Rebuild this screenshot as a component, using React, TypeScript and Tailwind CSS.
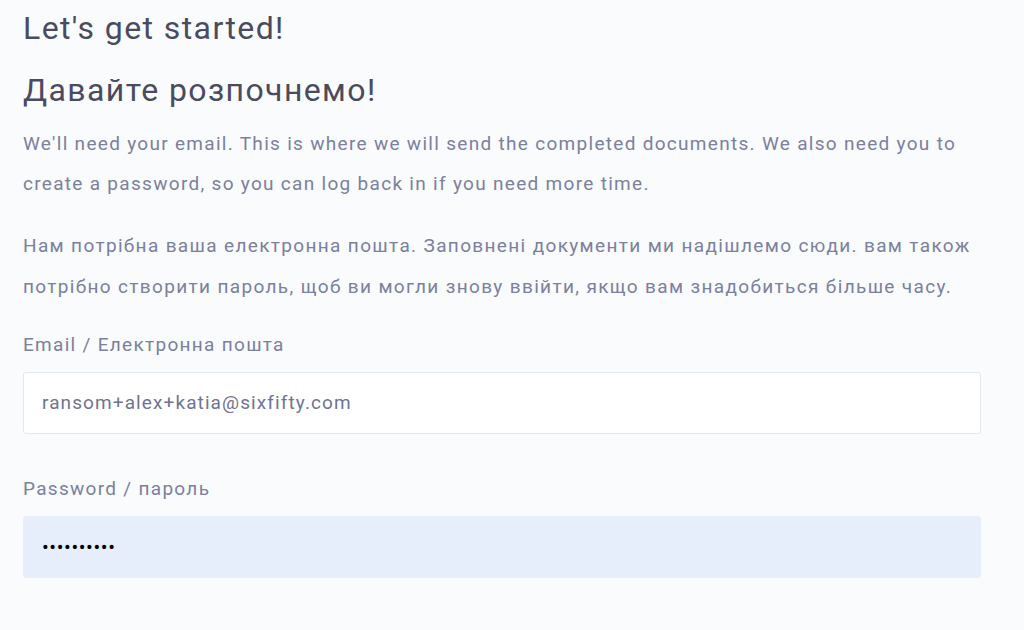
export default function App() {
  return (
    <div className="min-h-[630px] w-full bg-[#fafbfc] font-['Roboto',sans-serif]">
      <div className="w-[958px] ml-[23px] pt-[8px]">
        {/* headings */}
        <h1 className="text-[32px] leading-[40px] text-[#4a4b5e] tracking-[1.4px]">Let's get started!</h1>
        <h2 className="mt-[22px] text-[32px] leading-[40px] text-[#4a4b5e] tracking-[1.4px]">Давайте розпочнемо!</h2>

        {/* intro copy */}
        <p className="mt-[14px] text-[19px] leading-[40px] text-[#7b809e] tracking-[1.3px]">
          We'll need your email. This is where we will send the completed documents. We also need you to create a
          password, so you can log back in if you need more time.
        </p>
        <p className="mt-[21px] text-[19px] leading-[41px] text-[#7b809e] tracking-[1.35px]">
          Нам потрібна ваша електронна пошта. Заповнені документи ми надішлемо сюди. вам також потрібно створити
          пароль, щоб ви могли знову ввійти, якщо вам знадобиться більше часу.
        </p>

        {/* form */}
        <label className="block mt-[23px] text-[19px] leading-[30px] text-[#7b809e] tracking-[1.3px]">
          Email / Електронна пошта
        </label>
        <div className="mt-[12px] h-[62px] rounded-[3px] border border-[#e3e7ef] bg-white flex items-center pl-[18px] text-[19px] text-[#6f7490] tracking-[1.1px]">
          ransom+alex+katia@sixfifty.com
        </div>

        <label className="block mt-[40px] text-[19px] leading-[30px] text-[#7b809e] tracking-[1.3px]">
          Password / пароль
        </label>
        <div className="mt-[12px] h-[62px] rounded-[3px] bg-[#e6eefc] flex items-center pl-[19px] text-[20px] text-black tracking-[0.6px]">
          ••••••••••
        </div>
      </div>
    </div>
  )
}
